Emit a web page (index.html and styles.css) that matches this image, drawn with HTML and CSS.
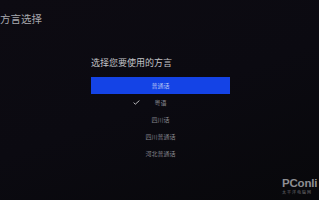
FILE: index.html
```html
<!DOCTYPE html>
<html lang="zh">
<head>
<meta charset="utf-8">
<link rel="stylesheet" href="styles.css">
</head>
<body>
<div class="page">
  <div class="title">方言选择</div>
  <div class="panel">
    <div class="heading">选择您要使用的方言</div>
    <div class="option selected">普通话</div>
    <div class="option checked">
      <svg class="check" width="7" height="5" viewBox="0 0 7 5"><polyline points="0.6,2.6 2.3,4.2 6.4,0.6" fill="none" stroke="#b8b8bc" stroke-width="1"/></svg>
      粤语
    </div>
    <div class="option">四川话</div>
    <div class="option">四川普通话</div>
    <div class="option">河北普通话</div>
  </div>
  <div class="watermark">
    <div class="wm-logo">PConli</div>
    <div class="wm-sub">太平洋电脑网</div>
  </div>
</div>
</body>
</html>
```

FILE: styles.css
```css
html, body {
  margin: 0;
  padding: 0;
}
body {
  width: 319px;
  height: 200px;
  overflow: hidden;
  background: #0b0a10;
  font-family: "Noto Sans CJK SC", "Noto Sans", sans-serif;
}
.page {
  position: relative;
  width: 319px;
  height: 200px;
  padding-top: 12px;
  box-sizing: border-box;
  background: linear-gradient(160deg, #0d0b12 0%, #0b0a11 50%, #08080b 100%);
}
.title {
  margin-left: 0;
  height: 13px;
  line-height: 13px;
  font-size: 10.5px;
  color: #a8a8ae;
}
.panel {
  margin-top: 33px;
  margin-left: 91px;
  width: 139px;
}
.heading {
  height: 10px;
  line-height: 10px;
  font-size: 9px;
  color: #c4c4c8;
  margin-bottom: 9px;
}
.option {
  position: relative;
  height: 17px;
  line-height: 17px;
  font-size: 6px;
  text-align: center;
  color: #86868e;
}
.option.selected {
  background: #1443e6;
  color: #b8c4f4;
}
.check {
  position: absolute;
  left: 42px;
  top: 6px;
}
.watermark {
  position: absolute;
  left: 282px;
  top: 177px;
  color: #8e8e92;
}
.wm-logo {
  font-family: "Liberation Sans", Arial, sans-serif;
  font-weight: bold;
  font-size: 11.5px;
  line-height: 12px;
  letter-spacing: -0.2px;
  white-space: nowrap;
}
.wm-sub {
  font-size: 4px;
  line-height: 6px;
  letter-spacing: 1px;
  white-space: nowrap;
  color: #6e6e72;
}
```
